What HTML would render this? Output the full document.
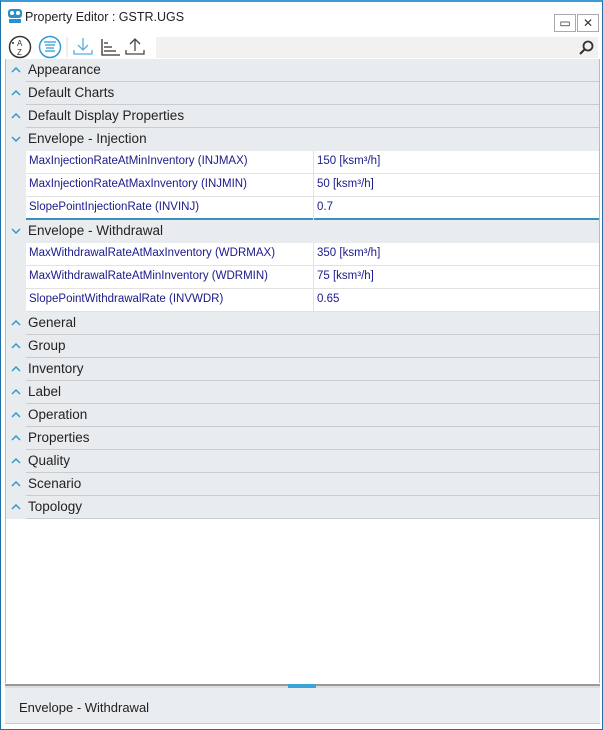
<!DOCTYPE html>
<html><head><style>
*{margin:0;padding:0;box-sizing:border-box}
body{width:603px;height:730px;background:#fff;font-family:"Liberation Sans",sans-serif;position:relative;overflow:hidden}
.win{position:absolute;left:0;top:0;width:603px;height:730px;border:1px solid #1e6fa6;border-top:2px solid #3a9bd5;background:#fff}
.title{position:absolute;left:24px;top:8px;font-size:12.5px;color:#222}
.btn{position:absolute;top:12px;width:22px;height:18px;border:1px solid #aaa;background:#fff;font-size:12px;text-align:center;line-height:16px;color:#333}
.search{position:absolute;left:155px;top:35px;width:442px;height:21px;background:#f1f1f1}
.grid{position:absolute;left:4px;top:57px;width:595px;height:624px;border-left:1px solid #bbb;border-right:1px solid #bbb;background:#fff}
.cat{position:absolute;left:0;width:593px;height:23px;background:#e9ecef}
.cat span{position:absolute;left:22px;top:3px;font-size:13.5px;color:#222}
.cat i{position:absolute;left:20px;right:0;bottom:0;border-bottom:1px solid #c9cccf}
.cat svg{position:absolute;left:5px;top:8px}
.prop{position:absolute;left:20px;width:573px;height:23px;background:#fff;border-bottom:1px solid #e2e2e2;font-size:11.5px;color:#1a1a8c}
.prop .n{position:absolute;left:3px;top:4px}
.prop .v{position:absolute;left:287px;top:0;height:23px;border-left:1px solid #e2e2e2;padding:4px 0 0 3px}
.gut{position:absolute;left:0;width:20px;background:#e9ecef}
.bottom{position:absolute;left:4px;top:686px;width:595px;height:36px;background:#e9edf0;border-bottom:1px solid #c8ccc4}
</style></head><body><div class="win">
<svg style="position:absolute;left:7px;top:7px" width="14" height="15" viewBox="0 0 14 15"><rect x="0" y="0" width="14" height="9" rx="3" fill="#2a8fd0"/><circle cx="4" cy="4" r="2" fill="#fff"/><circle cx="10" cy="4" r="2" fill="#fff"/><rect x="1" y="10" width="12" height="4" fill="#2a8fd0"/></svg>
<div class="title">Property Editor : GSTR.UGS</div>
<div class="btn" style="left:553px">&#9645;</div><div class="btn" style="left:576px">✕</div>
<svg style="position:absolute;left:7px;top:33px" width="140" height="24" viewBox="0 0 140 24">
<circle cx="12" cy="12" r="10.5" fill="none" stroke="#333" stroke-width="1.5"/><text x="9" y="11" font-size="8" font-family="Liberation Sans" fill="#333">A</text><text x="9" y="20" font-size="8" font-family="Liberation Sans" fill="#333">Z</text><circle cx="5" cy="8" r="1" fill="#333"/>
<circle cx="42" cy="12" r="10.5" fill="none" stroke="#2a9ad6" stroke-width="1.5"/><path d="M36 7h12M37 10h10M38 13h8M37 16h10" stroke="#2a9ad6" stroke-width="1.3"/>
<line x1="59" y1="2" x2="59" y2="22" stroke="#ddd"/>
<path d="M75 3v12M70 10l5 5 5-5M66 15v4h18v-4" fill="none" stroke="#59aee0" stroke-width="1.3"/>
<path d="M94 4v16h18M96 8h4M96 12h8M96 16h12" fill="none" stroke="#333" stroke-width="1.3"/>
<path d="M127 16V4M122 9l5-5 5 5M118 15v4h18v-4" fill="none" stroke="#444" stroke-width="1.3"/>
</svg>
<div class="search"><svg style="position:absolute;right:4px;top:3px" width="15" height="15"><circle cx="9" cy="6" r="4.5" fill="none" stroke="#333" stroke-width="1.8"/><path d="M6 9l-5 5" stroke="#333" stroke-width="2"/></svg></div>
<div class="grid">
<div class="cat" style="top:0"><svg width="10" height="6"><path d="M1 5l4-4 4 4" fill="none" stroke="#3399cc" stroke-width="1.5"/></svg><span>Appearance</span><i></i></div>
<div class="cat" style="top:23px"><svg width="10" height="6"><path d="M1 5l4-4 4 4" fill="none" stroke="#3399cc" stroke-width="1.5"/></svg><span>Default Charts</span><i></i></div>
<div class="cat" style="top:46px"><svg width="10" height="6"><path d="M1 5l4-4 4 4" fill="none" stroke="#3399cc" stroke-width="1.5"/></svg><span>Default Display Properties</span><i></i></div>
<div class="cat" style="top:69px"><svg width="10" height="6"><path d="M1 1l4 4 4-4" fill="none" stroke="#3399cc" stroke-width="1.5"/></svg><span>Envelope - Injection</span></div>
<div class="gut" style="top:92px;height:69px"></div>
<div class="prop" style="top:92px"><span class="n">MaxInjectionRateAtMinInventory (INJMAX)</span><span class="v">150 [ksm³/h]</span></div>
<div class="prop" style="top:115px"><span class="n">MaxInjectionRateAtMaxInventory (INJMIN)</span><span class="v">50 [ksm³/h]</span></div>
<div class="prop" style="top:138px;border-bottom:2px solid #3a8fc0"><span class="n">SlopePointInjectionRate (INVINJ)</span><span class="v">0.7</span></div>
<div class="cat" style="top:161px"><svg width="10" height="6"><path d="M1 1l4 4 4-4" fill="none" stroke="#3399cc" stroke-width="1.5"/></svg><span>Envelope - Withdrawal</span></div>
<div class="gut" style="top:184px;height:69px"></div>
<div class="prop" style="top:184px"><span class="n">MaxWithdrawalRateAtMaxInventory (WDRMAX)</span><span class="v">350 [ksm³/h]</span></div>
<div class="prop" style="top:207px"><span class="n">MaxWithdrawalRateAtMinInventory (WDRMIN)</span><span class="v">75 [ksm³/h]</span></div>
<div class="prop" style="top:230px"><span class="n">SlopePointWithdrawalRate (INVWDR)</span><span class="v">0.65</span></div>
<div class="cat" style="top:253px"><svg width="10" height="6"><path d="M1 5l4-4 4 4" fill="none" stroke="#3399cc" stroke-width="1.5"/></svg><span>General</span><i></i></div>
<div class="cat" style="top:276px"><svg width="10" height="6"><path d="M1 5l4-4 4 4" fill="none" stroke="#3399cc" stroke-width="1.5"/></svg><span>Group</span><i></i></div>
<div class="cat" style="top:299px"><svg width="10" height="6"><path d="M1 5l4-4 4 4" fill="none" stroke="#3399cc" stroke-width="1.5"/></svg><span>Inventory</span><i></i></div>
<div class="cat" style="top:322px"><svg width="10" height="6"><path d="M1 5l4-4 4 4" fill="none" stroke="#3399cc" stroke-width="1.5"/></svg><span>Label</span><i></i></div>
<div class="cat" style="top:345px"><svg width="10" height="6"><path d="M1 5l4-4 4 4" fill="none" stroke="#3399cc" stroke-width="1.5"/></svg><span>Operation</span><i></i></div>
<div class="cat" style="top:368px"><svg width="10" height="6"><path d="M1 5l4-4 4 4" fill="none" stroke="#3399cc" stroke-width="1.5"/></svg><span>Properties</span><i></i></div>
<div class="cat" style="top:391px"><svg width="10" height="6"><path d="M1 5l4-4 4 4" fill="none" stroke="#3399cc" stroke-width="1.5"/></svg><span>Quality</span><i></i></div>
<div class="cat" style="top:414px"><svg width="10" height="6"><path d="M1 5l4-4 4 4" fill="none" stroke="#3399cc" stroke-width="1.5"/></svg><span>Scenario</span><i></i></div>
<div class="cat" style="top:437px"><svg width="10" height="6"><path d="M1 5l4-4 4 4" fill="none" stroke="#3399cc" stroke-width="1.5"/></svg><span>Topology</span><i></i></div>
</div>
<div style="position:absolute;left:4px;top:682px;width:595px;height:4px;border-top:2px solid #999;background:#ddd"></div>
<div style="position:absolute;left:287px;top:682px;width:28px;height:4px;background:#3aa3d8"></div>
<div class="bottom"><span style="position:absolute;left:14px;top:12px;font-size:13px;color:#222">Envelope - Withdrawal</span></div>
</div></body></html>
